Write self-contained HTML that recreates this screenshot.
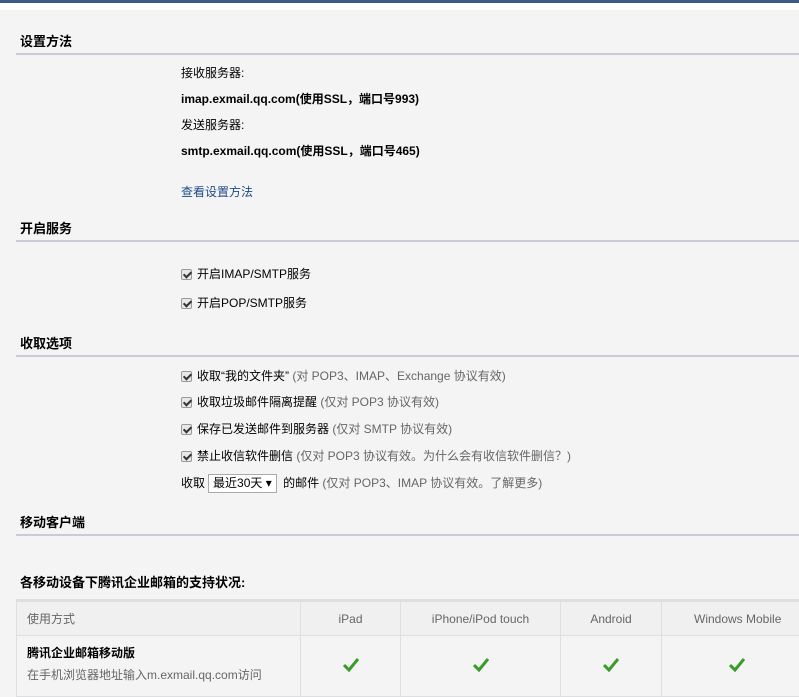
<!DOCTYPE html>
<html><head><meta charset="utf-8"><style>
body{margin:0;width:799px;height:679px;overflow:hidden;background:#f4f4f4;font-family:"Liberation Sans","Noto Sans CJK SC",sans-serif;font-size:12px;color:#000;position:relative}
.top{position:absolute;left:0;top:0;width:799px;height:3px;background:#3b5a86}
.white{position:absolute;left:0;top:3px;width:799px;height:7px;background:#fff}
.a{position:absolute;white-space:nowrap}
.h{position:absolute;left:20px;font-weight:bold;font-size:13px}
.ln{position:absolute;left:16px;right:0;height:2px;background:#c9ccd8}
.b{font-weight:bold}
.g{color:#666}
.lk{color:#1e4b84}
.cb{display:inline-block;width:11px;height:11px;background:#e8e8e8;border:1px solid #999;border-radius:2px;vertical-align:-2px;margin-right:5px;position:relative;box-sizing:border-box}
.cb:after{content:"";position:absolute;left:3px;top:0px;width:3px;height:6px;border:solid #333;border-width:0 2px 2px 0;transform:rotate(45deg)}
.sel{display:inline-block;border:1px solid #aaa;background:#fff;padding:1px 4px;margin:0 3px;height:15px;line-height:15px}
table{position:absolute;left:16px;top:599px;border-collapse:collapse;width:790px;table-layout:fixed}
td{border:1px solid #dde0e0;color:#666;text-align:center;font-size:12px}
tr.hd td{height:31px;background:#f0f0f0;border-top:3px solid #dde0e0}
</style></head><body>
<div class="top"></div><div class="white"></div>
<div class="h" style="top:31px">设置方法</div><div class="ln" style="top:53px"></div>
<div class="a" style="left:181px;top:64px">接收服务器:</div>
<div class="a b" style="left:181px;top:90px">imap.exmail.qq.com(使用SSL，端口号993)</div>
<div class="a" style="left:181px;top:116px">发送服务器:</div>
<div class="a b" style="left:181px;top:142px">smtp.exmail.qq.com(使用SSL，端口号465)</div>
<div class="a lk" style="left:181px;top:183px">查看设置方法</div>
<div class="h" style="top:218px">开启服务</div><div class="ln" style="top:240px"></div>
<div class="a" style="left:181px;top:265px"><span class="cb"></span>开启IMAP/SMTP服务</div>
<div class="a" style="left:181px;top:294px"><span class="cb"></span>开启POP/SMTP服务</div>
<div class="h" style="top:333px">收取选项</div><div class="ln" style="top:355px"></div>
<div class="a" style="left:181px;top:367px"><span class="cb"></span>收取“我的文件夹” <span class="g">(对 POP3、IMAP、Exchange 协议有效)</span></div>
<div class="a" style="left:181px;top:393px"><span class="cb"></span>收取垃圾邮件隔离提醒 <span class="g">(仅对 POP3 协议有效)</span></div>
<div class="a" style="left:181px;top:420px"><span class="cb"></span>保存已发送邮件到服务器 <span class="g">(仅对 SMTP 协议有效)</span></div>
<div class="a" style="left:181px;top:447px"><span class="cb"></span>禁止收信软件删信 <span class="g">(仅对 POP3 协议有效。为什么会有收信软件删信？)</span></div>
<div class="a" style="left:181px;top:474px">收取<span class="sel">最近30天 ▾</span> 的邮件 <span class="g">(仅对 POP3、IMAP 协议有效。了解更多)</span></div>
<div class="h" style="top:512px">移动客户端</div><div class="ln" style="top:534px"></div>
<div class="a b" style="left:20px;top:572px;font-size:13px">各移动设备下腾讯企业邮箱的支持状况:</div>
<table>
<colgroup><col style="width:284px"><col style="width:100px"><col style="width:160px"><col style="width:101px"><col style="width:145px"></colgroup>
<tr class="hd"><td style="text-align:left;padding-left:10px">使用方式</td><td>iPad</td><td>iPhone/iPod touch</td><td>Android</td><td style="text-align:left;padding-left:32px">Windows Mobile</td></tr>
<tr><td style="text-align:left;padding:8px 10px;height:44px;vertical-align:top"><div class="b" style="color:#000">腾讯企业邮箱移动版</div><div style="margin-top:5px">在手机浏览器地址输入m.exmail.qq.com访问</div></td>
<td><svg width="16" height="14" viewBox="0 0 16 14"><path d="M1 7 L6 12 L15 1" fill="none" stroke="#3a9a2a" stroke-width="3"/></svg></td>
<td><svg width="16" height="14" viewBox="0 0 16 14"><path d="M1 7 L6 12 L15 1" fill="none" stroke="#3a9a2a" stroke-width="3"/></svg></td>
<td><svg width="16" height="14" viewBox="0 0 16 14"><path d="M1 7 L6 12 L15 1" fill="none" stroke="#3a9a2a" stroke-width="3"/></svg></td>
<td style="text-align:left;padding-left:67px"><svg width="16" height="14" viewBox="0 0 16 14"><path d="M1 7 L6 12 L15 1" fill="none" stroke="#3a9a2a" stroke-width="3"/></svg></td></tr>
</table>
</body></html>
